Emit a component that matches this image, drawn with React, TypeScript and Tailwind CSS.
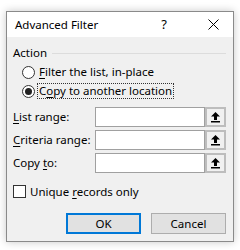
import React from "react";

const font = { fontFamily: '"Noto Sans", "Open Sans", sans-serif' };

const PickIcon = () => (
  <svg width="11" height="12" viewBox="0 0 11 12" className="block">
    <path d="M5.5 1 L10 5.5 L7 5.5 L7 9 L4 9 L4 5.5 L1 5.5 Z" fill="#000" />
    <rect x="1" y="10" width="9" height="1.5" fill="#000" />
  </svg>
);

const RangeRow = ({ label }: { label: React.ReactNode }) => (
  <div className="flex items-center h-[20px]">
    <div className="w-[82px] text-[11.5px] text-black leading-none">{label}</div>
    <div className="w-[110px] h-[20px] bg-white border border-[#a0a0a0]" />
    <div className="w-[21px] h-[20px] border-2 border-[#bdbdbd] bg-[#f0f0f0] flex items-center justify-center">
      <PickIcon />
    </div>
  </div>
);

const Radio = ({ checked }: { checked?: boolean }) => (
  <span className="w-[13px] h-[13px] rounded-full border border-[#333] bg-white flex items-center justify-center shrink-0">
    {checked && <span className="w-[7px] h-[7px] rounded-full bg-[#222]" />}
  </span>
);

export default function App() {
  return (
    <div className="w-[240px] h-[250px] bg-white pt-[11px] pl-[6px]" style={font}>
      <div className="w-[228px] h-[231px] border border-[#8a8a8a] bg-[#f0f0f0] flex flex-col shadow-[0_0_8px_rgba(0,0,0,0.22)]">
        {/* Title bar */}
        <div className="h-[25px] bg-white flex items-center pl-[8px] text-[11.5px] text-black">
          <span className="flex-1">Advanced Filter</span>
          <span className="w-[14px] text-center text-[13px] mr-[37px]">?</span>
          <svg width="11" height="11" viewBox="0 0 11 11" className="mr-[14px]">
            <path d="M0.5 0.5 L10.5 10.5 M10.5 0.5 L0.5 10.5" stroke="#000" strokeWidth="1" />
          </svg>
        </div>

        {/* Body */}
        <div className="flex flex-col pl-[6px] pr-[7px] text-[11.5px] text-black">
          <div className="flex items-center h-[14px] mt-[9px]">
            <span className="leading-none">Action</span>
            <span className="flex-1 h-px bg-[#dcdcdc] ml-[5px]" />
          </div>

          <div className="flex items-center h-[16px] mt-[4px] pl-[9px]">
            <Radio />
            <span className="ml-[4px] leading-none">
              <u className="underline-offset-2">F</u>ilter the list, in-place
            </span>
          </div>

          <div className="flex items-center h-[16px] mt-[3px] pl-[9px]">
            <Radio checked />
            <span className="ml-[2px] leading-none border border-dotted border-[#333] px-[1px] py-[1px]">
              C<u className="underline-offset-2">o</u>py to another location
            </span>
          </div>

          <div className="flex flex-col gap-[3px] mt-[8px]">
            <RangeRow label={<><u className="underline-offset-2">L</u>ist range:</>} />
            <RangeRow label={<><u className="underline-offset-2">C</u>riteria range:</>} />
            <RangeRow label={<>Copy <u className="underline-offset-2">t</u>o:</>} />
          </div>

          <div className="flex items-center mt-[12px] h-[13px]">
            <span className="w-[13px] h-[13px] border border-[#333] bg-white shrink-0" />
            <span className="ml-[4px] leading-none">
              Unique <u className="underline-offset-2">r</u>ecords only
            </span>
          </div>

          <div className="flex justify-end gap-[10px] mt-[15px]">
            <button className="w-[75px] h-[21px] border-2 border-[#0078d7] bg-[#e1e1e1] text-[11.5px] leading-none">
              OK
            </button>
            <button className="w-[75px] h-[21px] border border-[#adadad] bg-[#e1e1e1] text-[11.5px] leading-none">
              Cancel
            </button>
          </div>
        </div>
      </div>
    </div>
  );
}
